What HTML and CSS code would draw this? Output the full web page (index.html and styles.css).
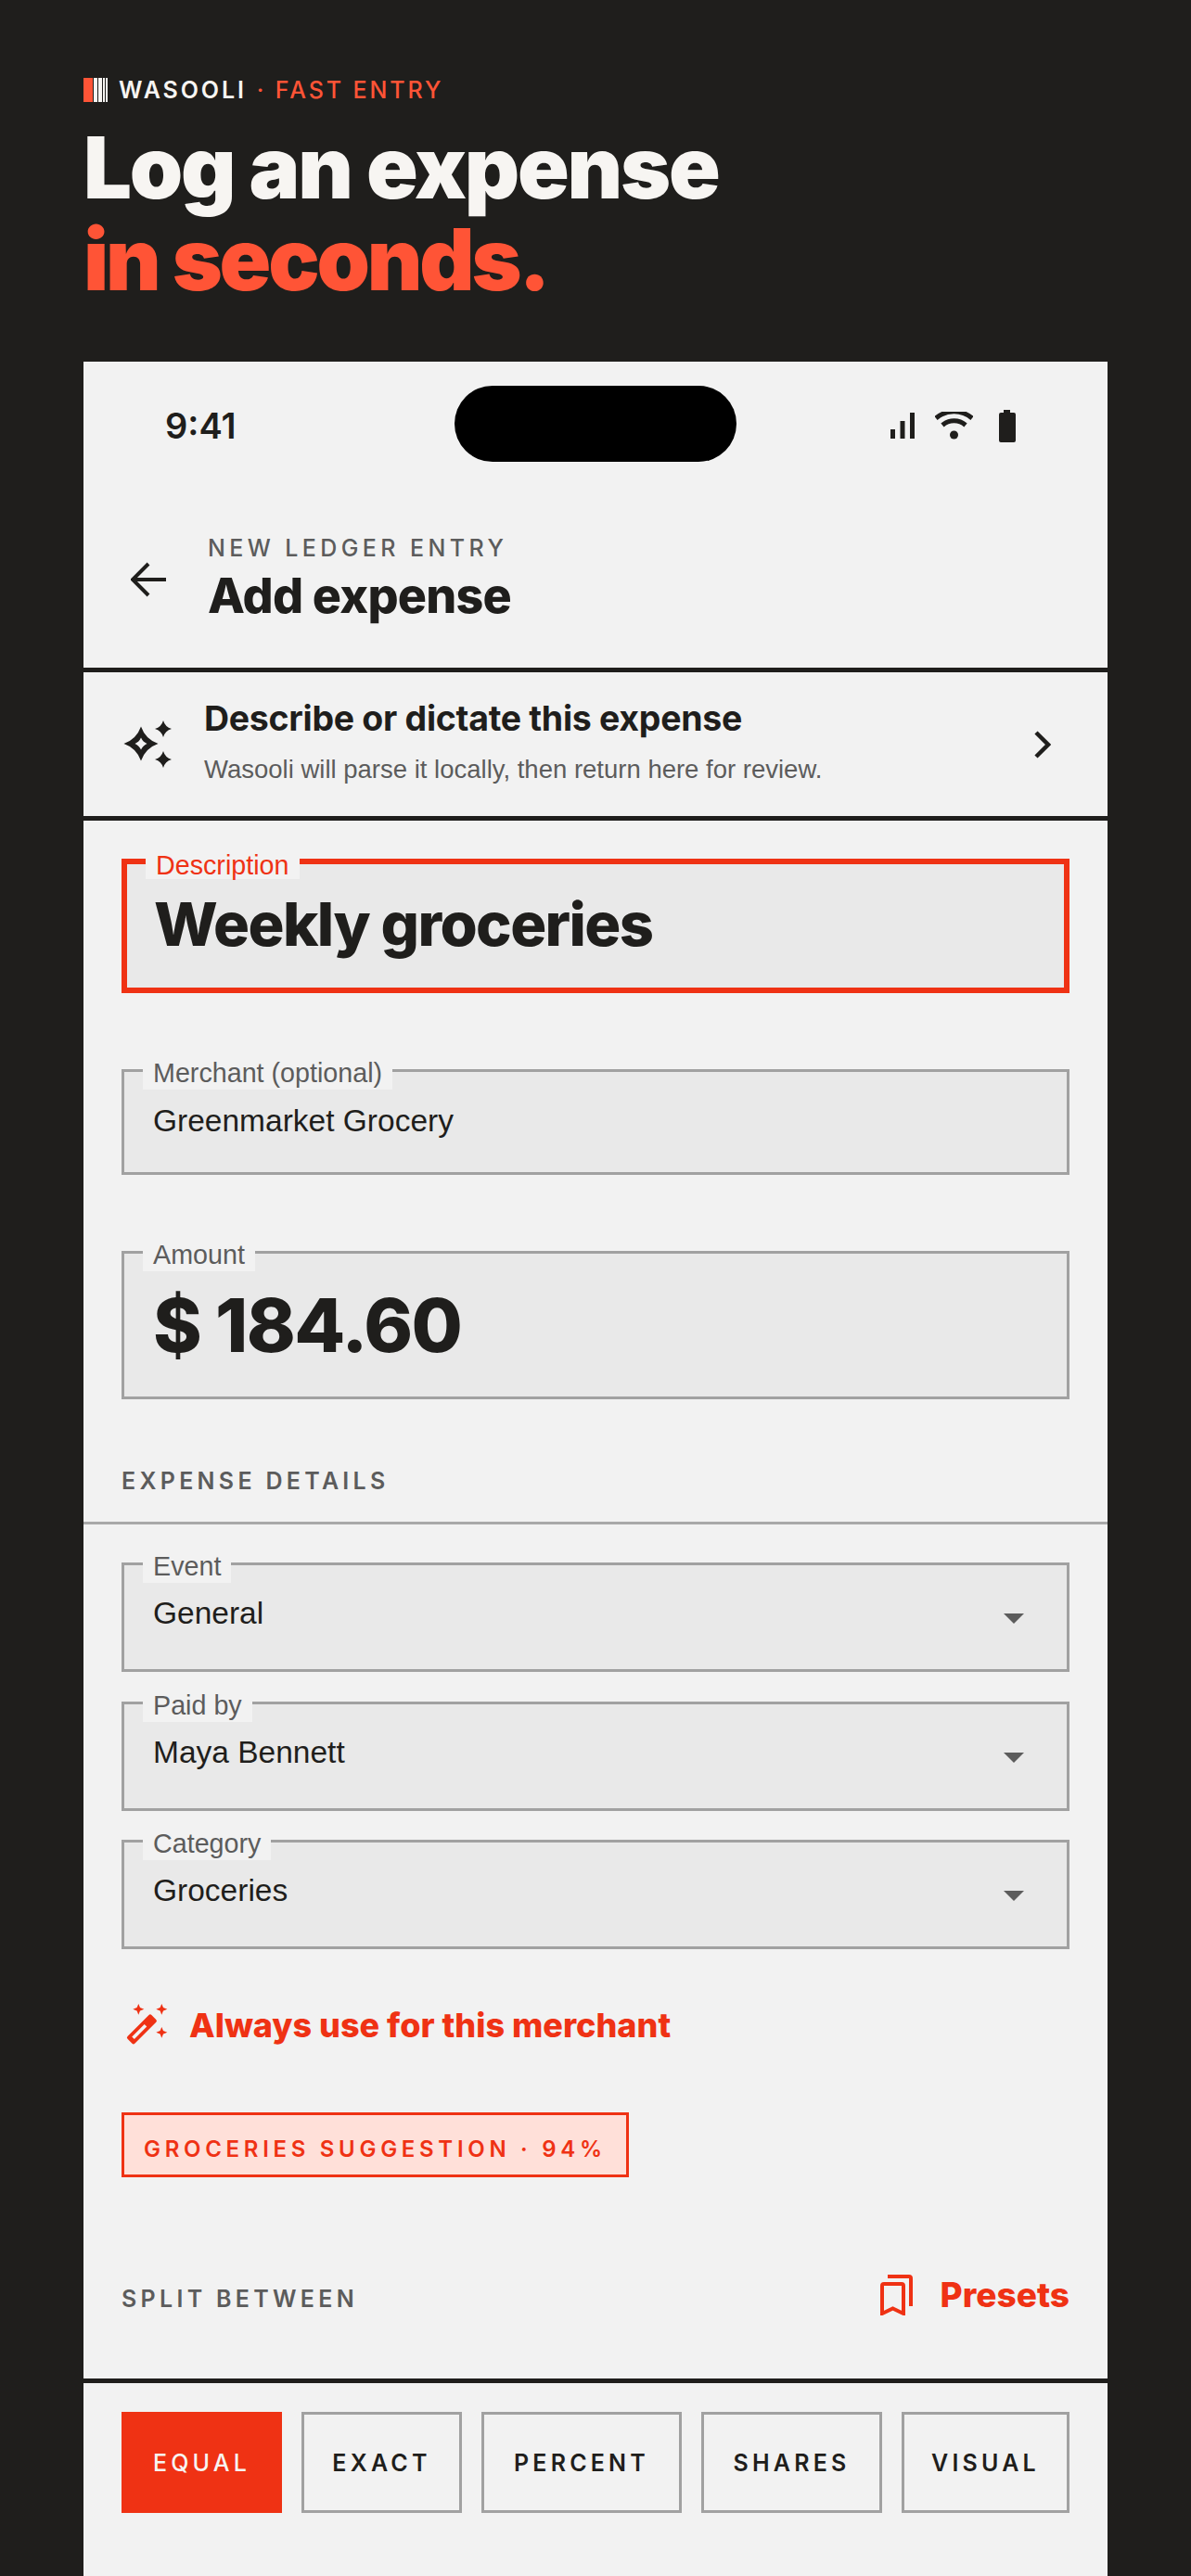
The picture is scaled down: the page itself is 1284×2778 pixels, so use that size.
FILE: index.html
```html
<!DOCTYPE html>
<html lang="en">
<head>
<meta charset="utf-8">
<title>Wasooli</title>
<link rel="stylesheet" href="styles.css">
</head>
<body>
<header class="hero">
  <div class="eyebrow">
    <svg class="logo" viewBox="0 0 26 26"><rect width="10" height="26" fill="#ff5436"/><rect x="11" width="4" height="26" fill="#f7f5f2"/><rect x="16" width="4" height="26" fill="#f7f5f2"/><rect x="21" width="2" height="26" fill="#f7f5f2"/><rect x="24" width="2" height="26" fill="#f7f5f2"/></svg>
    <span class="brand">WASOOLI</span><span class="tag">· FAST ENTRY</span>
  </div>
  <h1 class="headline"><span class="line-one">Log an expense</span><br><span class="accent">in seconds.</span></h1>
</header>
<main class="phone">
  <div class="status">
    <span class="time">9:41</span>
    <div class="island"></div>
    <div class="status-icons">
      <svg class="i-signal" viewBox="0 0 26 28"><rect y="18" width="5" height="10"/><rect x="10.500" y="9" width="5" height="19"/><rect x="21" width="5" height="28"/></svg>
      <svg class="i-wifi" viewBox="0 0 41 30"><circle cx="20.500" cy="25" r="4.500" fill="#1f1e1c" stroke="none"/><path d="M8 14.500a19 19 0 0 1 25 0"/><path d="M1 7a30 30 0 0 1 39 0" /></svg>
      <svg class="i-battery" viewBox="0 0 18 35"><path d="M5 0h7v3h4a2 2 0 0 1 2 2v28a2 2 0 0 1-2 2H2a2 2 0 0 1-2-2V5a2 2 0 0 1 2-2h3z"/></svg>
    </div>
  </div>
  <div class="appbar">
    <svg class="i-back" viewBox="0 0 38 38"><path d="M38 19H3M19 2 2 19l17 17"/></svg>
    <div class="appbar-text">
      <div class="overline">NEW LEDGER ENTRY</div>
      <div class="title">Add expense</div>
    </div>
  </div>
  <div class="ai-row">
    <svg class="i-sparkle" viewBox="0 0 54 54"><path fill="#1f1e1c" fill-rule="evenodd" d="M19 8.500Q23.800 22.200 37.500 27 23.800 31.800 19 45.500 14.200 31.800 .5 27 14.200 22.200 19 8.500ZM19 20.500Q21 25 25.500 27 21 29 19 33.500 17 29 12.500 27 17 25 19 20.500Z"/><path fill="#1f1e1c" d="M43 2Q45 9 52 11 45 13 43 20 41 13 34 11 41 9 43 2ZM43 35Q45 42 52 44 45 46 43 53 41 46 34 44 41 42 43 35Z"/></svg>
    <div class="ai-text">
      <div class="ai-title">Describe or dictate this expense</div>
      <div class="ai-sub">Wasooli will parse it locally, then return here for review.</div>
    </div>
    <svg class="i-chevron" viewBox="0 0 18 30"><path d="M2 2l13 13L2 28"/></svg>
  </div>
  <section class="main-fields">
    <div class="field field-focus">
      <span class="flabel">Description</span>
      <span class="fvalue-desc">Weekly groceries</span>
    </div>
    <div class="field field-merchant">
      <span class="flabel">Merchant (optional)</span>
      <span class="fvalue">Greenmarket Grocery</span>
    </div>
    <div class="field field-amount">
      <span class="flabel">Amount</span>
      <span class="fvalue-amount">$ 184.60</span>
    </div>
  </section>
  <div class="section-label details-label">EXPENSE DETAILS</div>
  <div class="rule"></div>
  <section class="selects">
    <div class="field field-select"><span class="flabel">Event</span><span class="fvalue">General</span><i class="caret"></i></div>
    <div class="field field-select"><span class="flabel">Paid by</span><span class="fvalue">Maya Bennett</span><i class="caret"></i></div>
    <div class="field field-select"><span class="flabel">Category</span><span class="fvalue">Groceries</span><i class="caret"></i></div>
  </section>
  <div class="always">
    <svg class="i-wand" viewBox="0 0 46 46"><path fill="#ef3214" d="M14.300 0 16 4 20.300 5.700 16 7.400 14.300 11.700 12.600 7.400 8.300 5.700 12.600 4ZM39.300 0 41 4 45.300 5.700 41 7.400 39.300 11.700 37.600 7.400 33.300 5.700 37.600 4ZM39.300 25 41 29 45.300 30.700 41 32.400 39.300 36.700 37.600 32.400 33.300 30.700 37.600 29Z"/><g transform="translate(5 40.300) rotate(-45)"><rect y="-5.500" width="36.500" height="11" rx="2" fill="#ef3214"/><rect x="5" y="-1.800" width="19" height="3.600" fill="#f2f2f2"/></g></svg>
    <span>Always use for this merchant</span>
  </div>
  <div class="chip">GROCERIES SUGGESTION · 94%</div>
  <div class="split-head">
    <span class="section-label">SPLIT BETWEEN</span>
    <span class="presets">
      <svg class="i-presets" viewBox="0 0 35 44"><path d="M8 2h23a2 2 0 0 1 2 2v30" fill="none"/><path d="M2 42V12a2 2 0 0 1 2-2h19a2 2 0 0 1 2 2v30l-11.500-5.500z" fill="none"/></svg>
      Presets
    </span>
  </div>
  <div class="tabs">
    <span class="tab tab-on">EQUAL</span>
    <span class="tab">EXACT</span>
    <span class="tab">PERCENT</span>
    <span class="tab">SHARES</span>
    <span class="tab">VISUAL</span>
  </div>
</main>
</body>
</html>
```
FILE: styles.css
```css
* { box-sizing: border-box; }
html, body { margin: 0; height: 2778px; overflow: hidden; }
body { background: #1f1e1c; color: #1f1e1c; font-family: Inter, "Liberation Sans", sans-serif; padding: 84px 90px 0; }
.hero { height: 306px; }
.eyebrow { display: flex; align-items: center; height: 26px; font-size: 25px; font-weight: 600; letter-spacing: 2.9px; }
.logo { width: 26px; height: 26px; margin-right: 12px; }
.brand { color: #f7f5f2; margin-right: 11px; }
.tag { color: #ff5436; font-weight: 500; }
.headline { margin: 21px 0 0; font-size: 92px; font-weight: 900; line-height: 99px; color: #f7f5f2; }
.line-one { letter-spacing: -2.200px; }
.accent { color: #ff5436; letter-spacing: -3.200px; }
.phone { width: 1104px; height: 2388px; background: #f2f2f2; overflow: hidden; }
.status { height: 126px; padding: 26px 0 0 88px; display: flex; align-items: flex-start; }
.time { font-size: 38px; font-weight: 600; line-height: 86px; width: 312px; }
.island { width: 304px; height: 82px; border-radius: 41px; background: #000; }
.status-icons { height: 86px; margin-left: 166px; display: flex; align-items: center; }
.status-icons svg { fill: #1f1e1c; flex: none; }
.i-signal { width: 26px; height: 28px; }
.i-wifi { width: 41px; height: 30px; margin-left: 22px; fill: none !important; stroke: #1f1e1c; stroke-width: 5; }
.i-battery { width: 18px; height: 35px; margin-left: 28px; }
.appbar { height: 209px; padding: 55px 0 0 51px; display: flex; border-bottom: 5px solid #1f1e1c; }
.i-back { width: 38px; height: 38px; margin-top: 35px; fill: none; stroke: #1f1e1c; stroke-width: 4; flex: none; }
.appbar-text { margin-left: 45px; }
.overline { font-size: 25px; font-weight: 500; letter-spacing: 4.400px; line-height: 30px; color: #5c5c5c; margin-top: 5px; }
.title { font-size: 52px; font-weight: 800; line-height: 62px; letter-spacing: -0.8px; margin-top: 6px; }
.ai-row { height: 160px; padding: 0 61px 5px 43px; display: flex; align-items: center; border-bottom: 5px solid #1f1e1c; }
.i-sparkle { width: 54px; height: 54px; flex: none; margin-top: 3px; }
.ai-text { flex: 1; margin-left: 33px; }
.ai-title { font-size: 37.500px; font-weight: 700; line-height: 44px; letter-spacing: -0.3px; }
.ai-sub { font-family: "Liberation Sans", sans-serif; font-size: 27.500px; line-height: 36px; margin-top: 15px; color: #5c5c5c; }
.i-chevron { width: 18px; height: 30px; fill: none; stroke: #1f1e1c; stroke-width: 4.500; flex: none; margin-top: 5px; }
.main-fields { padding: 41px 41px 0; display: flex; flex-direction: column; }
.field { position: relative; background: #e9e9e9; border: 3px solid #a1a1a1; display: flex; align-items: center; padding: 0 31px; }
.flabel { position: absolute; left: 20px; top: -17px; padding: 0 11px; background: #f2f2f2; font-family: "Liberation Sans", sans-serif; font-size: 28.700px; line-height: 36px; color: #5c5c5c; }
.field-focus { height: 145px; border: 6px solid #ef3214; padding: 0 29px 4px; }
.field-focus .flabel { color: #ef3214; left: 20px; top: -14px; line-height: 30px; }
.fvalue-desc { font-size: 65px; font-weight: 800; letter-spacing: -1.6px; line-height: 76px; }
.fvalue { font-family: "Liberation Sans", sans-serif; font-size: 33.500px; line-height: 40px; margin-top: -2px; }
.field-merchant { height: 114px; margin-top: 82px; }
.field-amount { height: 160px; margin-top: 82px; }
.fvalue-amount { font-size: 80px; font-weight: 800; line-height: 96px; letter-spacing: -1.600px; }
.section-label { font-size: 25px; font-weight: 600; letter-spacing: 4.300px; color: #5c5c5c; line-height: 30px; }
.details-label { margin: 73px 0 0 41px; }
.rule { height: 3px; background: #a9a9a9; margin-top: 29px; }
.selects { padding: 41px 41px 0; display: flex; flex-direction: column; gap: 31.500px; }
.field-select { height: 118px; padding-bottom: 6px; }
.caret { position: absolute; right: 46px; top: 52px; width: 0; height: 0; border: 11px solid transparent; border-top-color: #5c5c5c; border-bottom-width: 0; }
.always { display: flex; align-items: center; margin: 59px 0 0 45px; height: 46px; color: #ef3214; font-size: 36px; font-weight: 800; }
.i-wand { width: 46px; height: 46px; margin-right: 23px; flex: none; }
.chip { margin: 71px 0 0 41px; width: 547px; height: 70px; border: 3px solid #ef3214; background: #ffe0d9; color: #ef3214; display: flex; align-items: center; padding: 9px 0 0 21px; font-size: 24px; font-weight: 600; letter-spacing: 4.700px; white-space: nowrap; }
.split-head { height: 222px; border-bottom: 5px solid #1f1e1c; padding: 106px 41px 0; display: flex; justify-content: space-between; align-items: flex-start; }
.split-head .section-label { margin-top: 10px; }
.presets { display: flex; align-items: center; color: #ef3214; font-size: 37px; font-weight: 800; line-height: 44px; margin-top: -1px; }
.i-presets { width: 35px; height: 44px; margin-right: 30px; fill: none; stroke: #ef3214; stroke-width: 4; }
.tabs { display: grid; grid-template-columns: 173fr 173fr 216fr 195fr 181fr; gap: 21px; padding: 31px 41px 0; }
.tab { height: 109px; border: 3px solid #a1a1a1; display: flex; align-items: center; justify-content: center; font-size: 25px; font-weight: 600; letter-spacing: 4.200px; }
.tab-on { background: #ef3214; border-color: #ef3214; color: #f7f5f2; font-weight: 500; }
```
